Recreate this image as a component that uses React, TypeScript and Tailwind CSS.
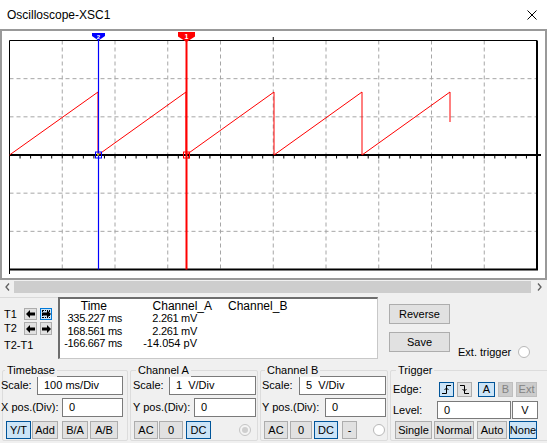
import React from 'react';

const X0 = 9.5;
const X1 = 537;
const Y0 = 40.5;
const Y1 = 269.5;
const DX = (X1 - X0) / 10;
const DY = (Y1 - Y0) / 6;
const CY = 155;

const Scope = () => {
  const vGrid = Array.from({ length: 9 }, (_, i) => X0 + DX * (i + 1));
  const hGrid = [1, 2, 4, 5].map((j) => Y0 + DY * j);
  const ticks = Array.from({ length: 51 }, (_, i) => X0 + (DX / 5) * i);
  const wave = 'M9.5 155 L98 92 L98 155 L186 92 L186 155 L274 92 L274 155 L362 92 L362 155 L450 92 L450 122';

  return (
    <svg width={543} height={247} viewBox="2 31 543 247" className="block">
      {vGrid.map((x) => (
        <line key={'v' + x} x1={x} y1={Y0} x2={x} y2={Y1} stroke="#a6a6a6" strokeDasharray="4 3" />
      ))}
      {hGrid.map((y) => (
        <line key={'h' + y} x1={X0} y1={y} x2={X1} y2={y} stroke="#a6a6a6" strokeDasharray="4 3" />
      ))}
      {/* frame */}
      <line x1={X0} y1={Y0} x2={X1} y2={Y0} stroke="#000" strokeWidth={1} />
      <line x1={X0} y1={Y1} x2={X1 + 1} y2={Y1} stroke="#000" strokeWidth={2} />
      <line x1={X0} y1={Y0} x2={X0} y2={274} stroke="#000" strokeWidth={1} />
      <line x1={X1} y1={Y0} x2={X1} y2={Y1} stroke="#000" strokeWidth={2} />
      <line x1={273.25} y1={37} x2={273.25} y2={Y0} stroke="#000" />
      {/* axis */}
      <line x1={X0} y1={CY} x2={541} y2={CY} stroke="#000" strokeWidth={2} />
      {ticks.map((x) => (
        <line key={'t' + x} x1={x} y1={CY} x2={x} y2={158.5} stroke="#000" />
      ))}
      {/* trace */}
      <path d={wave} fill="none" stroke="#ff0000" strokeWidth={1} />
      {/* cursors */}
      <line x1={98.5} y1={36} x2={98.5} y2={Y1} stroke="#0000ff" strokeWidth={1.2} />
      <line x1={186.5} y1={36} x2={186.5} y2={Y1} stroke="#ff0000" strokeWidth={2} />
      <rect x={95.5} y={152} width={6} height={6} fill="none" stroke="#0000ff" />
      <rect x={97} y={153.5} width={2} height={2} fill="#c8c800" />
      <rect x={183.5} y={152} width={6} height={6} fill="none" stroke="#ff0000" />
      <polygon points="92,33 105,33 105,36 98.5,40.5 92,36" fill="#0000ff" />
      <text x={98.5} y={38.5} fontSize={6} fill="#fff" textAnchor="middle" fontWeight="bold" fontFamily="Liberation Sans, sans-serif">2</text>
      <polygon points="178,32 195,32 195,36.5 186.5,42 178,36.5" fill="#ff0000" />
      <text x={186.5} y={39} fontSize={7} fill="#fff" textAnchor="middle" fontWeight="bold" fontFamily="Liberation Sans, sans-serif">1</text>
    </svg>
  );
};

const Btn = ({ children, className = '', on = false, off = false }: { children: React.ReactNode; className?: string; on?: boolean; off?: boolean }) => (
  <div
    className={`flex items-center justify-center h-full border text-[11px] leading-none ${
      on ? 'bg-[#cce4f7] border-[#005499] text-black' : off ? 'bg-[#cccccc] border-[#bfbfbf] text-[#838383]' : 'bg-[#e1e1e1] border-[#adadad] text-black'
    } ${className}`}
  >
    {children}
  </div>
);

const Field = ({ value, className = '' }: { value: string; className?: string }) => (
  <div className={`h-full bg-white border border-[#7a7a7a] pl-[6px] flex items-center text-[11px] whitespace-pre ${className}`}>{value}</div>
);

const Radio = ({ filled = false, className = '' }: { filled?: boolean; className?: string }) => (
  <div className={`w-[12px] h-[12px] rounded-full border flex items-center justify-center ${filled ? 'border-[#c4c4c4] bg-[#f4f4f4]' : 'border-[#b8b8b8] bg-white'} ${className}`}>
    {filled && <div className="w-[6px] h-[6px] rounded-full bg-[#cfcfcf]" />}
  </div>
);

const Group = ({ title, className = '', labelClass = '', children }: { title: string; className?: string; labelClass?: string; children: React.ReactNode }) => (
  <div className={`relative h-[71px] border border-[#dcdcdc] rounded-[2px] shrink-0 ${className}`}>
    <span className={`absolute top-[-8px] px-[2px] bg-[#f0f0f0] text-[11px] leading-[14px] ${labelClass}`}>{title}</span>
    {children}
  </div>
);

const Arrow = ({ dir }: { dir: 'l' | 'r' }) => (
  <svg width={9} height={8} viewBox="0 0 9 8">
    <polygon
      points={dir === 'l' ? '0,4 4,0 4,2.5 9,2.5 9,5.5 4,5.5 4,8' : '9,4 5,0 5,2.5 0,2.5 0,5.5 5,5.5 5,8'}
      fill="#000"
    />
  </svg>
);

const ArrowBtn = ({ dir, focus = false, className = '' }: { dir: 'l' | 'r'; focus?: boolean; className?: string }) => (
  <div
    className={`h-full flex items-center justify-center border ${
      focus ? 'bg-[#cce4f7] border-[#0078d7] outline-1 outline-dotted outline-black -outline-offset-3' : 'bg-[#e1e1e1] border-[#adadad]'
    } ${className}`}
  >
    <Arrow dir={dir} />
  </div>
);

export default function App() {
  return (
    <div className="w-[547px] h-[443px] overflow-hidden bg-[#f0f0f0] text-black font-['Liberation_Sans',Arial,sans-serif] flex flex-col">
      {/* title bar */}
      <div className="h-[29px] bg-white flex items-center justify-between pl-[7px] pr-[10px] shrink-0">
        <span className="text-[12px]">Oscilloscope-XSC1</span>
        <svg width={10} height={10} viewBox="0 0 10 10">
          <path d="M0.5 0.5 L9.5 9.5 M9.5 0.5 L0.5 9.5" stroke="#000" strokeWidth={1} />
        </svg>
      </div>

      {/* screen */}
      <div className="h-[251px] border-2 border-[#999999] bg-white shrink-0">
        <Scope />
      </div>

      {/* scrollbar */}
      <div className="mt-[1px] h-[12px] flex shrink-0">
        <div className="w-[14px] flex items-center justify-center">
          <svg width={5} height={8} viewBox="0 0 5 8">
            <path d="M4 0.5 L1 4 L4 7.5" fill="none" stroke="#606060" strokeWidth={1.3} />
          </svg>
        </div>
        <div className="flex-1 bg-[#cdcdcd]" />
        <div className="w-[16px] flex items-center justify-center">
          <svg width={5} height={8} viewBox="0 0 5 8">
            <path d="M1 0.5 L4 4 L1 7.5" fill="none" stroke="#606060" strokeWidth={1.3} />
          </svg>
        </div>
      </div>

      {/* readout row */}
      <div className="mt-[4px] h-[62px] flex shrink-0">
        <div className="w-[58px] border-t border-[#d9d9d9] pt-[10px] pl-[4px] text-[11px]">
          <div className="h-[12px] flex items-center">
            <span className="w-[20px]">T1</span>
            <ArrowBtn dir="l" className="w-[13px]" />
            <ArrowBtn dir="r" focus className="w-[12px] ml-[3px]" />
          </div>
          <div className="h-[13px] mt-[2px] flex items-center">
            <span className="w-[20px]">T2</span>
            <ArrowBtn dir="l" className="w-[13px]" />
            <ArrowBtn dir="r" className="w-[12px] ml-[3px]" />
          </div>
          <div className="h-[14px] mt-[3px] flex items-center">T2-T1</div>
        </div>

        <div className="w-[320px] h-full bg-white border-t-2 border-l-2 border-t-[#6d6d6d] border-l-[#6d6d6d] border-r border-b border-r-[#c8c8c8] border-b-[#c8c8c8] flex text-[11px] leading-[12.3px] tracking-[-0.3px] pt-[1px]">
          <div className="w-[64px] flex flex-col items-end pr-[2px]">
            <div className="mr-[15px] text-[12px] tracking-normal">Time</div>
            <div>335.227 ms</div>
            <div>168.561 ms</div>
            <div>-166.667 ms</div>
          </div>
          <div className="w-[73px] flex flex-col items-end">
            <div className="mr-[-15px] text-[12px] tracking-normal">Channel_A</div>
            <div>2.261 mV</div>
            <div>2.261 mV</div>
            <div className="tracking-normal">-14.054 pV</div>
          </div>
          <div className="ml-[31px] text-[12px] tracking-normal">Channel_B</div>
        </div>

        <div className="ml-[11px] pt-[7px] w-[61px] flex flex-col">
          <div className="h-[20px]">
            <Btn>Reverse</Btn>
          </div>
          <div className="h-[20px] mt-[8px]">
            <Btn>Save</Btn>
          </div>
        </div>

        <div className="self-end ml-[8px] h-[14px] flex items-center text-[11px]">
          <span>Ext. trigger</span>
          <Radio className="ml-[7px]" />
        </div>
      </div>

      {/* group row */}
      <div className="mt-[11px] flex pl-[2px] shrink-0">
        <Group title="Timebase" className="w-[126px]" labelClass="left-[2px]">
          <div className="pt-[5px] text-[11px]">
            <div className="h-[19px] flex items-center">
              <span className="w-[36px] ml-[-2px]">Scale:</span>
              <Field value="100 ms/Div" className="w-[86px]" />
            </div>
            <div className="h-[19px] mt-[3px] flex items-center">
              <span className="w-[61px] ml-[-2px] whitespace-nowrap">X pos.(Div):</span>
              <Field value="0" className="w-[61px]" />
            </div>
            <div className="h-[18px] mt-[4px] flex items-center ml-[3px]">
              <Btn on className="w-[25px]">Y/T</Btn>
              <Btn className="w-[26px] ml-[1px]">Add</Btn>
              <Btn className="w-[26px] ml-[4px]">B/A</Btn>
              <Btn className="w-[28px] ml-[2px]">A/B</Btn>
            </div>
          </div>
        </Group>

        <Group title="Channel A" className="w-[128px] ml-[2px]" labelClass="left-[5px]">
          <div className="pt-[5px] text-[11px]">
            <div className="h-[19px] flex items-center">
              <span className="w-[36px] ml-[2px]">Scale:</span>
              <Field value="1  V/Div" className="w-[87px]" />
            </div>
            <div className="h-[19px] mt-[3px] flex items-center">
              <span className="w-[61px] ml-[2px] whitespace-nowrap">Y pos.(Div):</span>
              <Field value="0" className="w-[62px]" />
            </div>
            <div className="h-[18px] mt-[4px] flex items-center ml-[3px]">
              <Btn className="w-[24px]">AC</Btn>
              <Btn className="w-[24px] ml-[1px]">0</Btn>
              <Btn on className="w-[25px] ml-[3px]">DC</Btn>
              <Radio filled className="ml-[28px]" />
            </div>
          </div>
        </Group>

        <Group title="Channel B" className="w-[128px] ml-[2px]" labelClass="left-[4px]">
          <div className="pt-[5px] text-[11px]">
            <div className="h-[19px] flex items-center">
              <span className="w-[37px] ml-[1px]">Scale:</span>
              <Field value="5  V/Div" className="w-[87px]" />
            </div>
            <div className="h-[19px] mt-[3px] flex items-center">
              <span className="w-[63px] ml-[1px] whitespace-nowrap">Y pos.(Div):</span>
              <Field value="0" className="w-[61px]" />
            </div>
            <div className="h-[18px] mt-[4px] flex items-center ml-[3px]">
              <Btn className="w-[24px]">AC</Btn>
              <Btn className="w-[22px] ml-[2px]">0</Btn>
              <Btn on className="w-[24px] ml-[2px]">DC</Btn>
              <Btn className="w-[15px] ml-[4px]">-</Btn>
              <Radio className="ml-[16px]" />
            </div>
          </div>
        </Group>

        <Group title="Trigger" className="w-[160px] ml-[2px]" labelClass="left-[5px]">
          <div className="pt-[11px] text-[11px]">
            <div className="h-[15px] flex items-center">
              <span className="w-[46px] ml-[2px]">Edge:</span>
              <Btn on className="w-[15px]">
                <svg width={11} height={11} viewBox="0 0 11 11">
                  <path d="M1 9.5 H5.5 V1.5 H10 M3.5 6 L5.5 4 L7.5 6" fill="none" stroke="#000" strokeWidth={1} />
                </svg>
              </Btn>
              <Btn className="w-[15px] ml-[3px]">
                <svg width={11} height={11} viewBox="0 0 11 11">
                  <path d="M1 1.5 H5.5 V9.5 H10 M3.5 5 L5.5 7 L7.5 5" fill="none" stroke="#000" strokeWidth={1} />
                </svg>
              </Btn>
              <Btn on className="w-[17px] ml-[6px]">A</Btn>
              <Btn off className="w-[15px] ml-[3px]">B</Btn>
              <Btn off className="w-[21px] ml-[3px]">Ext</Btn>
            </div>
            <div className="h-[18px] mt-[4px] flex items-center">
              <span className="w-[44px] ml-[2px]">Level:</span>
              <Field value="0" className="w-[74px]" />
              <div className="w-[26px] h-full ml-[1px] bg-white border border-[#7a7a7a] flex items-center justify-center">V</div>
            </div>
            <div className="h-[18px] mt-[2px] flex items-center ml-[4px]">
              <Btn className="w-[37px]">Single</Btn>
              <Btn className="w-[40px] ml-[2px]">Normal</Btn>
              <Btn className="w-[30px] ml-[3px]">Auto</Btn>
              <Btn on className="w-[28px] ml-[2px]">None</Btn>
            </div>
          </div>
        </Group>
      </div>
    </div>
  );
}
